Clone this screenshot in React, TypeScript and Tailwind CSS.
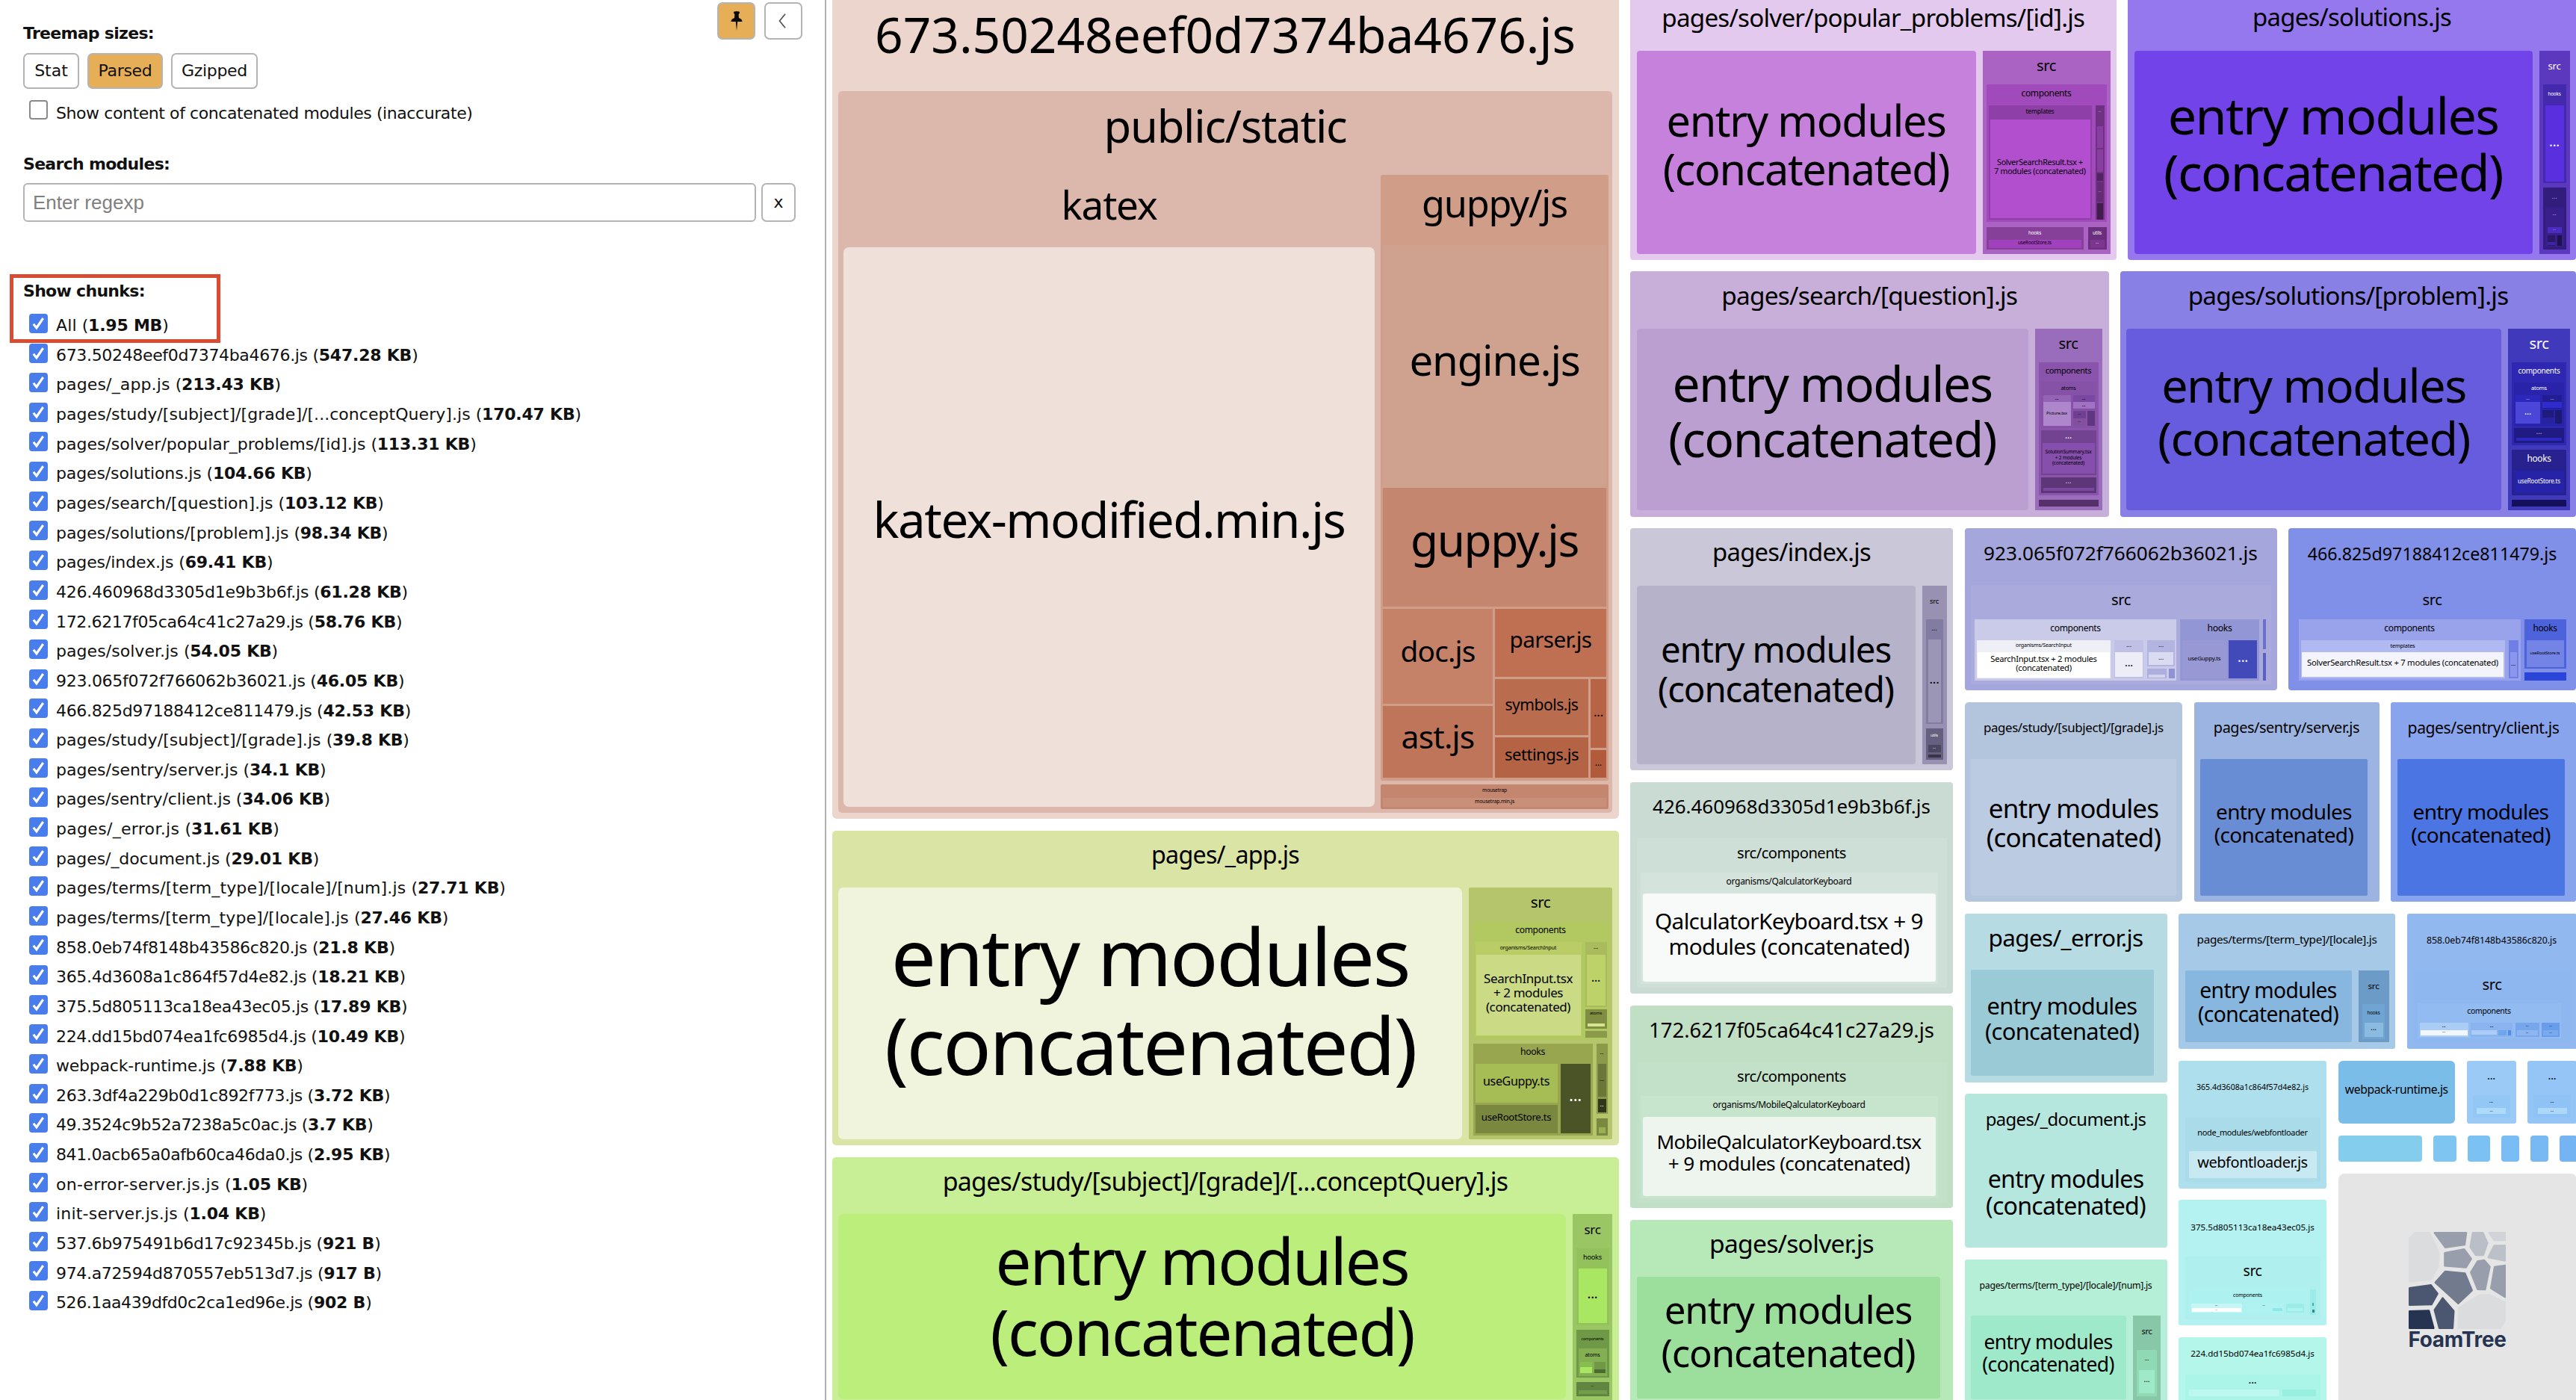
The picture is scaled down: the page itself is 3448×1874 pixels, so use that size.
import React from "react";

const NOTO = '"Noto Sans"';
const canvas = document.createElement("canvas").getContext("2d")!;

function measure(text: string, font: string) {
  canvas.font = font;
  return canvas.measureText(text).width / 100;
}

/* Text whose size follows from the width it has to fill. */
function Fit({ t, w, k = 1.05, family = NOTO, weight = "", c = "" }: { t: string; w: number; k?: number; family?: string; weight?: string; c?: string }) {
  const lines = t.split("|");
  const widths = lines.map((l) => measure(l, `${weight} 100px ${family}`.trim()));
  const i = widths.indexOf(Math.max(...widths));
  const size = (w / widths[i]) * k;
  const spacing = (w - widths[i] * size) / lines[i].length;
  return (
    <div
      className={`shrink-0 pb-[0.33em] text-center leading-[1.12] whitespace-nowrap ${c}`}
      style={{ fontSize: size, letterSpacing: spacing }}
    >
      {lines.map((l) => (
        <div key={l}>{l}</div>
      ))}
    </div>
  );
}

type BoxProps = { c: string; t?: string; w?: number; h?: string; b?: string; k?: number; children?: React.ReactNode };

/* A treemap cell: a heading over nested cells, or a centred label. */
function Box({ c, t, w = 0, h = "", b = "", k, children }: BoxProps) {
  return (
    <div className={`flex shrink-0 flex-col ${c}`}>
      {(t || h) && (
        <div className={`flex items-center justify-center ${children ? `shrink-0 ${h}` : "min-h-0 grow basis-0"}`}>
          {t && <Fit t={t} w={w} k={k} />}
        </div>
      )}
      {children && <div className={`flex min-h-0 grow ${b}`}>{children}</div>}
    </div>
  );
}

const ENTRY = "entry modules|(concatenated)";
const DOTS = "...";

function Chunk673() {
  return (
    <Box c="h-[1105px] rounded-[6px] bg-[#ebd5cd]" t="673.50248eef0d7374ba4676.js" w={938} k={1.0} h="h-[131px]" b="px-[8.5px]">
      <Box c="h-[966px] w-[1036px] rounded-[5px] bg-[#dcb8ac]" t="public/static" w={325} h="h-[112px]" b="pl-[7px] gap-[8px]">
        <Box c="w-[711px]" t="katex" w={128} h="h-[97px]">
          <Box c="h-[749px] w-[711px] rounded-[7px] bg-[#efe0da]" t="katex-modified.min.js" w={632} />
        </Box>
        <div className="flex flex-col gap-[5px]">
          <Box c="h-[811px] w-[305px] rounded-[3px] bg-[#d09d89]" t="guppy/js" w={195} h="h-[94px]" b="flex-col px-[3px]">
            <Box c="h-[325px] bg-[#cfa28f]" t="engine.js" w={228} />
            <Box c="h-[159px] bg-[#c58670]" t="guppy.js" w={225} />
            <div className="mt-[3px] flex gap-[3px]">
              <div className="flex flex-col gap-[3px]">
                <Box c="h-[127px] w-[147px] bg-[#c58268]" t="doc.js" w={100} />
                <Box c="h-[96px] w-[147px] bg-[#be755a]" t="ast.js" w={98} />
              </div>
              <div className="flex flex-col gap-[3px]">
                <Box c="h-[91px] w-[149px] bg-[#bf7053]" t="parser.js" w={110} />
                <div className="flex gap-[3px]">
                  <div className="flex flex-col gap-[3px]">
                    <Box c="h-[75px] w-[125px] bg-[#ba6c4f]" t="symbols.js" w={98} />
                    <Box c="h-[54px] w-[125px] bg-[#b46345]" t="settings.js" w={99} />
                  </div>
                  <div className="flex flex-col gap-[3px]">
                    <Box c="h-[92px] w-[21px] bg-[#b76345]" t={DOTS} w={13} />
                    <Box c="h-[37px] w-[21px] bg-[#b25a3c]" t={DOTS} w={9} />
                  </div>
                </div>
              </div>
            </div>
          </Box>
          <Box c="h-[33px] w-[305px] rounded-[2px] bg-[#c58670]" t="mousetrap" w={33} h="h-[18px]" b="px-[3px] pb-[3px]">
            <Box c="h-[12px] w-[299px] bg-[#c98f79]" t="mousetrap.min.js" w={53} />
          </Box>
        </div>
      </Box>
    </Box>
  );
}

function ChunkApp() {
  return (
    <Box c="h-[421.5px] rounded-[5px] bg-[#dae4a5]" t="pages/_app.js" w={198} h="h-[76px]" b="px-[8.5px] gap-[9px]">
      <Box c="h-[337px] w-[835px] rounded-[7px] bg-[#f1f4dd]" t={ENTRY} w={711} />
      <Box c="h-[337px] w-[192px] rounded-[2px] bg-[#b5c56c]" t="src" w={26.6} h="h-[46px]" b="flex-col gap-[6px] px-[5.5px]">
        <Box c="h-[157px] w-[181px] bg-[#b2c861]" t="components" w={67.6} h="h-[27px]" b="gap-[5px] pl-[3px]">
          <Box c="h-[126px] w-[142px] bg-[#b9cc66]" t="organisms/SearchInput" w={75.7} h="h-[17px]" b="px-[1px]">
            <Box c="h-[108px] w-[140px] bg-[#cbda85]" t="SearchInput.tsx|+ 2 modules|(concatenated)" w={119} />
          </Box>
          <div className="flex flex-col gap-[3px]">
            <Box c="h-[87px] w-[29px] bg-[#a9bb5c]" t={DOTS} w={6} h="h-[17px]" b="px-[2px]">
              <Box c="h-[68px] w-[25px] bg-[#bdd36a]" t={DOTS} w={12} />
            </Box>
            <Box c="h-[26px] w-[29px] bg-[#7f8e42]" t="atoms" w={16} h="h-[14px]" b="px-[3px] gap-[1px]">
              <Box c="mt-[5px] h-[4px] w-[23px] bg-[#d5e58e]" />
            </Box>
            <Box c="h-[9px] w-[29px] bg-[#8a9a4a]" />
          </div>
        </Box>
        <div className="flex gap-[5px]">
          <Box c="h-[123px] w-[160px] bg-[#98a74f]" t="hooks" w={33} h="h-[27px]" b="gap-[4px] pl-[3px]">
            <div className="flex flex-col gap-[3px]">
              <Box c="h-[52px] w-[110px] bg-[#a6bc54]" t="useGuppy.ts" w={89} />
              <Box c="h-[38px] w-[110px] bg-[#7a873f]" t="useRootStore.ts" w={93.5} />
            </div>
            <Box c="h-[93px] w-[40px] bg-[#4a5426] text-white" t={DOTS} w={17} />
          </Box>
          <div className="flex flex-col gap-[6px]">
            <Box c="h-[94px] w-[15px] bg-[#8b9a49]" t={DOTS} w={5} h="h-[27px]" b="flex-col gap-[3px] px-[2px]">
              <Box c="h-[44px] bg-[#6b7738]" t={DOTS} w={6} />
              <Box c="h-[18px] bg-[#30371a] text-white" t={DOTS} w={5} />
            </Box>
            <Box c="h-[23px] w-[15px] bg-[#7a893f]" h="h-[12px]" b="px-[3px]">
              <Box c="h-[8px] w-[9px] bg-[#9bb055]" />
            </Box>
          </div>
        </div>
      </Box>
    </Box>
  );
}

function ChunkStudyQuery() {
  return (
    <Box c="h-[400px] rounded-[5px] bg-[#c9ef96]" t="pages/study/[subject]/[grade]/[...conceptQuery].js" w={757} h="h-[76.5px]" b="px-[8.5px] gap-[9px]">
      <Box c="h-[248px] w-[974px] rounded-[7px] bg-[#bcee7c]" t={ENTRY} w={567} />
      <Box c="h-[300px] w-[53px] bg-[#9ac763]" t="src" w={22} h="h-[46px]" b="flex-col gap-[6px] px-[4.5px]">
        <Box c="h-[103px] w-[44px] bg-[#93c25c]" t="hooks" w={25} h="h-[27px]" b="px-[3px]">
          <Box c="h-[73px] w-[38px] bg-[#a9e662]" t={DOTS} w={14} />
        </Box>
        <Box c="h-[64px] w-[44px] bg-[#6f9946]" t="components" w={30} h="h-[25px]" b="px-[3px]">
          <Box c="h-[37px] w-[38px] bg-[#84b053]" t="atoms" w={20} h="h-[18px]" b="gap-[3px] px-[2px]">
            <Box c="h-[15px] w-[16px] bg-[#85c04f]" h="h-[7px]" b="">
              <Box c="h-[8px] w-[16px] bg-[#a9e662]" />
            </Box>
            <Box c="h-[15px] w-[15px] bg-[#6f9946]" h="h-[10px]">
              <Box c="h-[5px] w-[15px] bg-[#4b6b2f]" />
            </Box>
          </Box>
        </Box>
        <Box c="h-[19px] w-[44px] bg-[#618440]" t={DOTS} w={4} h="h-[11px]" b="px-[3px]">
          <Box c="h-[5px] w-[38px] bg-[#729d4b]" />
        </Box>
      </Box>
    </Box>
  );
}

function ChunkPopular() {
  return (
    <Box c="h-[356.5px] w-[650.5px] rounded-[4px] bg-[#e4c9ee]" t="pages/solver/popular_problems/[id].js" w={566} h="h-[76.5px]" b="pl-[8.5px] gap-[9px]">
      <Box c="h-[272px] w-[454px] rounded-[4px] bg-[#c581dc]" t={ENTRY} w={383.5} />
      <Box c="h-[272px] w-[171px] bg-[#ab63c3]" t="src" w={26} h="h-[45.5px]" b="flex-col gap-[7px] px-[5px]">
        <Box c="h-[184px] w-[161px] bg-[#a14abb]" t="components" w={67} h="h-[28px]" b="gap-[5px] pl-[3px]">
          <Box c="h-[153px] w-[138px] bg-[#8f40a8]" t="templates" w={38} h="h-[18.5px]" b="px-[2px]">
            <Box c="h-[132px] w-[134px] bg-[#b14fcf]" t="SolverSearchResult.tsx +|7 modules (concatenated)" w={122.5} />
          </Box>
          <Box c="h-[153px] w-[12px] bg-[#6f3181] text-white/60" t={DOTS} w={4} h="h-[18px]" b="flex-col gap-[2px] px-[2px]">
            <Box c="mt-[10px] h-[29px] bg-[#8a3da1]" />
            <Box c="h-[30px] bg-[#8a3da1]" />
            <Box c="h-[10px] bg-[#4f2460]" />
            <Box c="h-[26px] bg-[#622b74]" t={DOTS} w={4} />
            <Box c="h-[22px] bg-[#411c4c]" />
          </Box>
        </Box>
        <div className="flex gap-[6px]">
          <Box c="h-[30px] w-[130px] bg-[#87409a]" h="h-0" b="flex-col px-[3px]">
            <Box c="h-[16.5px] text-white" t="hooks" w={17} />
            <Box c="h-[11px] bg-[#a241bd]" t="useRootStore.ts" w={45} />
          </Box>
          <Box c="h-[30px] w-[25px] bg-[#6b2f7e] text-white" t="utils" w={12} h="h-[16.5px]" b="px-[3px]">
            <Box c="h-[11px] w-[19px] bg-[#7d3592]" t={DOTS} w={4} />
          </Box>
        </div>
      </Box>
    </Box>
  );
}

function ChunkSolutions() {
  return (
    <Box c="h-[356.5px] w-[600px] rounded-[4px] bg-[#9678ee]" t="pages/solutions.js" w={266} h="h-[76.5px]" b="pl-[8.5px] gap-[9px]">
      <Box c="h-[272px] w-[533px] rounded-[4px] bg-[#7243e9]" t={ENTRY} w={454} />
      <Box c="h-[272px] w-[41px] bg-[#5b38be] text-white" t="src" w={17} h="h-[45.5px]" b="flex-col gap-[6px] px-[5px]">
        <Box c="h-[132px] w-[31px] bg-[#4529ac]" t="hooks" w={17} h="h-[28px]" b="px-[3px]">
          <Box c="h-[102px] w-[25px] bg-[#592fde]" t={DOTS} w={14} />
        </Box>
        <Box c="h-[83px] w-[31px] bg-[#321d7c] text-white/60" t={DOTS} w={7} h="h-[27px]" b="px-[3px]">
          <Box c="h-[52px] w-[25px] bg-[#381f8c]" t={DOTS} w={5} h="h-[17px]" b="flex-col gap-[3px] px-[3px]">
            <Box c="mt-[9px] h-[8px] bg-[#4b2bc0]" t={DOTS} w={4} />
            <div className="flex gap-[3px]">
              <Box c="h-[14px] w-[10px] bg-[#2a1866]" h="h-[9px]">
                <Box c="h-[4px] w-[10px] bg-[#4123a6]" />
              </Box>
              <Box c="h-[14px] w-[6px] bg-[#1f114c]" />
            </div>
          </Box>
        </Box>
      </Box>
    </Box>
  );
}

function ChunkSearch() {
  return (
    <Box c="h-[328.5px] w-[640.5px] rounded-[4px] bg-[#c8afd9]" t="pages/search/[question].js" w={396} h="h-[76.5px]" b="pl-[8.5px] gap-[9px]">
      <Box c="h-[243px] w-[524px] rounded-[4px] bg-[#bb9fd1]" t={ENTRY} w={439} />
      <Box c="h-[243px] w-[90px] bg-[#9a6cbc]" t="src" w={26} h="h-[45.5px]" b="flex-col gap-[6px] px-[5px]">
        <Box c="h-[178px] w-[80px] bg-[#8a53ac]" t="components" w={61.5} h="h-[26px]" b="flex-col gap-[3px] px-[3px]">
          <Box c="h-[62px] w-[74px] bg-[#8552a8]" t="atoms" w={20} h="h-[18px]" b="gap-[3px] px-[3px]">
            <Box c="h-[41px] w-[37px] bg-[#9463b5]" t={DOTS} w={5} h="h-[9px]">
              <Box c="h-[32px] w-[37px] bg-[#ad86cc]" t="Picture.tsx" w={28} />
            </Box>
            <div className="flex flex-col gap-[2px]">
              <Box c="h-[19px] w-[29px] bg-[#7a48a0]" t={DOTS} w={5} h="h-[9px]">
                <Box c="h-[9px] w-[29px] bg-[#a172c4]" t={DOTS} w={5} />
              </Box>
              <div className="flex gap-[2px]">
                <Box c="h-[20px] w-[17px] bg-[#6f4092]" t={DOTS} w={4} h="h-[10px]">
                  <Box c="h-[10px] w-[17px] bg-[#82509f]" t={DOTS} w={4} />
                </Box>
                <Box c="h-[20px] w-[10px] bg-[#613681]" />
              </div>
            </div>
          </Box>
          <Box c="h-[60px] w-[74px] bg-[#714390]" h="h-0" b="flex-col px-[2px]">
            <Box c="h-[17px] text-white" t={DOTS} w={9} />
            <Box c="h-[41px] bg-[#864ead]" t="SolutionSummary.tsx|+ 2 modules|(concatenated)" w={62} />
          </Box>
          <Box c="h-[21px] w-[74px] bg-[#5d3677] text-white/70" t={DOTS} w={8} h="h-[14px]" b="px-[3px]">
            <Box c="h-[4px] w-[68px] bg-[#7a46a0]" />
          </Box>
        </Box>
        <Box c="h-[9px] w-[80px] bg-[#553069]" />
      </Box>
    </Box>
  );
}

function ChunkProblem() {
  return (
    <Box c="h-[328.5px] w-[610px] rounded-[4px] bg-[#8880e4]" t="pages/solutions/[problem].js" w={429} h="h-[76.5px]" b="pl-[8px] gap-[9px]">
      <Box c="h-[243px] w-[502px] rounded-[4px] bg-[#665cdd]" t={ENTRY} w={418} />
      <Box c="h-[243px] w-[83px] bg-[#4039bc] text-white" t="src" w={26} h="h-[45.5px]" b="flex-col gap-[6px] px-[5px]">
        <Box c="h-[111px] w-[73px] bg-[#2d27b2]" t="components" w={56} h="h-[27px]" b="flex-col gap-[3px] px-[3px]">
          <Box c="h-[58px] w-[67px] bg-[#2823a9]" t="atoms" w={21} h="h-[17px]" b="gap-[3px] px-[2px]">
            <Box c="h-[38px] w-[33px] bg-[#2c28bd] text-white/60" t={DOTS} w={5} h="h-[9px]">
              <Box c="h-[29px] w-[33px] bg-[#4c46d8] text-white" t={DOTS} w={9} />
            </Box>
            <div className="flex flex-col gap-[2px] text-white/60">
              <Box c="h-[18px] w-[26px] bg-[#221d92]" t={DOTS} w={5} h="h-[9px]">
                <Box c="h-[8px] w-[26px] bg-[#2e2ccc]" />
              </Box>
              <div className="flex gap-[2px]">
                <Box c="h-[18px] w-[15px] bg-[#1f1b7c]" h="h-[10px]">
                  <Box c="h-[8px] w-[15px] bg-[#2722a0]" />
                </Box>
                <Box c="h-[18px] w-[9px] bg-[#1c1970]" />
              </div>
            </div>
          </Box>
          <Box c="h-[20px] w-[67px] bg-[#1f1b82] text-white/60" t={DOTS} w={8} h="h-[13px]" b="px-[3px]">
            <Box c="h-[4px] w-[61px] bg-[#2c28bd]" />
          </Box>
        </Box>
        <Box c="h-[61px] w-[73px] bg-[#27228f]" t="hooks" w={32} h="h-[28px]" b="px-[3px]">
          <Box c="h-[30px] w-[67px] bg-[#2723a8]" t="useRootStore.ts" w={57} />
        </Box>
        <Box c="h-[9px] w-[73px] bg-[#14105c]" />
      </Box>
    </Box>
  );
}

function ColumnC() {
  return (
    <div className="flex w-[432px] shrink-0 flex-col gap-[15.5px]">
      <Box c="h-[324px] rounded-[4px] bg-[#cac8d8]" t="pages/index.js" w={212} h="h-[76.5px]" b="pl-[8.5px] gap-[9px]">
        <Box c="h-[239px] w-[373px] rounded-[4px] bg-[#b5b2c9]" t={ENTRY} w={316} />
        <Box c="h-[239px] w-[33px] bg-[#9891b2]" t="src" w={12} h="h-[45.5px]" b="flex-col gap-[6px] px-[5px]">
          <Box c="h-[140px] w-[23px] bg-[#827ba2]" t={DOTS} w={7} h="h-[27px]" b="px-[3px]">
            <Box c="h-[111px] w-[17px] bg-[#9c96b6]" t={DOTS} w={13} />
          </Box>
          <Box c="h-[42px] w-[23px] bg-[#65607f] text-white" t="utils" w={10} h="h-[22px]" b="flex-col gap-[3px] px-[3px]">
            <Box c="h-[10px] bg-[#4b4762]" t={DOTS} w={4} />
            <Box c="h-[4px] bg-[#38354a]" />
          </Box>
        </Box>
      </Box>
      <Box c="h-[283.5px] rounded-[4px] bg-[#c9dbd2]" t="426.460968d3305d1e9b3b6f.js" w={372} k={1} h="h-[75px]" b="px-[8.5px]">
        <Box c="h-[200px] w-[415px] bg-[#cddfd6]" t="src/components" w={146} h="h-[46px]" b="px-[5px]">
          <Box c="h-[149px] w-[398px] bg-[#d4e3dc]" t="organisms/QalculatorKeyboard" w={168} h="h-[28px]" b="px-[3px]">
            <Box c="h-[118px] w-[392px] rounded-[3px] bg-[#f8faf9]" t="QalculatorKeyboard.tsx + 9|modules (concatenated)" w={359} />
          </Box>
        </Box>
      </Box>
      <Box c="h-[271.5px] rounded-[4px] bg-[#c0dfc4]" t="172.6217f05ca64c41c27a29.js" w={382} k={1} h="h-[76px]" b="px-[8.5px]">
        <Box c="h-[188px] w-[415px] bg-[#c3e1c9]" t="src/components" w={146} h="h-[45px]" b="px-[5px]">
          <Box c="h-[137px] w-[398px] bg-[#c7e4cd]" t="organisms/MobileQalculatorKeyboard" w={204} h="h-[28px]" b="px-[3px]">
            <Box c="h-[106px] w-[392px] rounded-[3px] bg-[#edf5ee]" t="MobileQalculatorKeyboard.tsx|+ 9 modules (concatenated)" w={354.5} />
          </Box>
        </Box>
      </Box>
      <Box c="h-[300px] rounded-[4px] bg-[#b7e8b8]" t="pages/solver.js" w={220} h="h-[76px]" b="px-[8.5px]">
        <Box c="h-[163px] w-[406px] rounded-[3px] bg-[#9cdf9c]" t={ENTRY} w={340} />
      </Box>
    </div>
  );
}

function RowD1() {
  return (
    <div className="flex gap-[15.5px]">
      <Box c="h-[216.5px] w-[418px] rounded-[4px] bg-[#a5a6db]" t="923.065f072f766062b36021.js" w={367} k={1} h="h-[76px]" b="px-[8.5px]">
        <Box c="h-[133px] w-[402px] bg-[#aaaadc]" t="src" w={26} h="h-[46px]" b="gap-[5px] pl-[5px]">
          <Box c="h-[82px] w-[270px] bg-[#cacae9]" t="components" w={67.6} h="h-[28px]" b="gap-[5px] pl-[3px]">
            <Box c="h-[51px] w-[179px] bg-[#efeff8]" t="organisms/SearchInput" w={75} h="h-[16px]" b="px-[1px]">
              <Box c="h-[34px] w-[177px] bg-white" t="SearchInput.tsx + 2 modules|(concatenated)" w={142.6} />
            </Box>
            <Box c="h-[51px] w-[39px] bg-[#c0c0e6]" t={DOTS} w={7} h="h-[16px]" b="px-[1px]">
              <Box c="h-[33px] w-[37px] bg-[#ededf8]" t={DOTS} w={11} />
            </Box>
            <div className="flex flex-col gap-[3px]">
              <Box c="h-[35px] w-[37px] bg-[#b3b4e0]" t={DOTS} w={7} h="h-[16px]" b="px-[2px]">
                <Box c="h-[17px] w-[33px] bg-[#dadaf0]" t={DOTS} w={7} />
              </Box>
              <div className="flex gap-[3px]">
                <Box c="h-[13px] w-[26px] bg-[#aeaede]" h="h-[8px]" b="px-[2px]">
                  <Box c="h-[4px] w-[22px] bg-[#d3d3ed]" />
                </Box>
                <Box c="h-[13px] w-[8px] bg-[#9092d6]" />
              </div>
            </div>
          </Box>
          <Box c="h-[82px] w-[106px] bg-[#9296d4]" t="hooks" w={33} h="h-[28px]" b="gap-[3px] pl-[3px]">
            <Box c="h-[51px] w-[59px] bg-[#9898d5]" t="useGuppy.ts" w={44} />
            <Box c="h-[51px] w-[38px] bg-[#4249b9] text-white" t={DOTS} w={14} />
          </Box>
          <div className="flex flex-col gap-[5px]">
            <Box c="h-[40px] w-[4px] bg-[#6c6fcb]" />
            <Box c="h-[37px] w-[4px] bg-[#5c5fc5]" />
          </div>
        </Box>
      </Box>
      <Box c="h-[216.5px] w-[385px] rounded-[4px] bg-[#8090e8]" t="466.825d97188412ce811479.js" w={334} k={1} h="h-[76px]" b="px-[8.5px]">
        <Box c="h-[133px] w-[368px]" t="src" w={26} h="h-[46px]" b="gap-[5px] pl-[5px]">
          <Box c="h-[82px] w-[297px] bg-[#98a3ec]" t="components" w={67.6} h="h-[28px]" b="gap-[5px] pl-[3px]">
            <Box c="h-[51px] w-[273px] bg-[#b0b9f1]" t="templates" w={33} h="h-[16px]" b="px-[1.5px]">
              <Box c="h-[33px] w-[270px] bg-[#f4f5fc]" t="SolverSearchResult.tsx + 7 modules (concatenated)" w={256} />
            </Box>
            <Box c="h-[51px] w-[13px] bg-[#6f7fe5]" h="h-[16px]" b="px-[2px]">
              <Box c="h-[33px] w-[9px] bg-[#8a97ec]" t={DOTS} w={6} />
            </Box>
          </Box>
          <div className="flex flex-col gap-[5px]">
            <Box c="h-[66px] w-[56px] bg-[#4c63dc]" t="hooks" w={32} h="h-[28px]" b="px-[3px]">
              <Box c="h-[36px] w-[50px] bg-[#7483e6]" t="useRootStore.ts" w={40} />
            </Box>
            <Box c="h-[11px] w-[56px] bg-[#2b45d8]" />
          </div>
        </Box>
      </Box>
    </div>
  );
}

function RowD2() {
  return (
    <div className="flex gap-[15.5px]">
      <Box c="h-[267px] w-[291.5px] rounded-[5px] bg-[#b3c5dd]" t="pages/study/[subject]/[grade].js" w={241} h="h-[76px]" b="pl-[8.5px]">
        <Box c="h-[183px] w-[275px] rounded-[2px] bg-[#bbcbe2]" t={ENTRY} w={233.4} />
      </Box>
      <Box c="h-[267px] w-[248px] rounded-[3px] bg-[#9bb4e1]" t="pages/sentry/server.js" w={195.4} h="h-[76px]" b="pl-[8.5px]">
        <Box c="h-[183px] w-[224px] rounded-[2px] bg-[#688dd4]" t={ENTRY} w={186.4} />
      </Box>
      <Box c="h-[267px] w-[248px] rounded-[3px] bg-[#88a4ed]" t="pages/sentry/client.js" w={203} h="h-[76px]" b="pl-[8.5px]">
        <Box c="h-[183px] w-[224px] rounded-[2px] bg-[#4a75e3]" t={ENTRY} w={186.4} />
      </Box>
    </div>
  );
}

function ColumnE() {
  return (
    <div className="flex w-[271px] shrink-0 flex-col gap-[15.5px]">
      <Box c="h-[226px] rounded-[3px] bg-[#b7dbe2]" t="pages/_error.js" w={207} h="h-[75px]" b="pl-[8px]">
        <Box c="h-[142px] w-[245px] rounded-[2px] bg-[#99cad6]" t={ENTRY} w={206} />
      </Box>
      <Box c="h-[206px] rounded-[4px] bg-[#b5e7df]" t="pages/_document.js" w={214.7} h="h-[76px]" b="px-[8px]">
        <Box c="h-[122px] w-[255px]" t={ENTRY} w={214} />
      </Box>
      <Box c="h-[300px] rounded-[3px] bg-[#b5efd7]" t="pages/terms/[term_type]/[locale]/[num].js" w={231} h="h-[75px]" b="pl-[8px] gap-[9.5px]">
        <Box c="h-[112px] w-[208px] rounded-[2px] bg-[#9de9c9]" t={ENTRY} w={176.5} />
        <Box c="h-[220px] w-[37px] bg-[#88c8a8]" t="src" w={14} h="h-[46px]" b="px-[5px]">
          <Box c="h-[62px] w-[27px] bg-[#8fd9b5]" t={DOTS} w={6} h="h-[27px]" b="px-[3px]">
            <Box c="h-[31px] w-[21px] bg-[#9fe9c9]" t={DOTS} w={8} />
          </Box>
        </Box>
      </Box>
    </div>
  );
}

function Terms() {
  return (
    <div className="flex gap-[15.5px]">
      <Box c="h-[181.5px] w-[290px] rounded-[3px] bg-[#a5c9e7]" t="pages/terms/[term_type]/[locale].js" w={241} h="h-[76px]" b="pl-[8.5px] gap-[9px]">
        <Box c="h-[96px] w-[223px] rounded-[2px] bg-[#87b6df]" t={ENTRY} w={188} />
        <Box c="h-[96px] w-[41px] bg-[#6b9bc6]" t="src" w={15} h="h-[45.5px]" b="px-[5.5px]">
          <Box c="h-[47px] w-[30px] bg-[#6fa4d3]" t="hooks" w={17} h="h-[24.5px]" b="px-[2.5px]">
            <Box c="h-[19px] w-[25px] bg-[#8bbbe0]" t={DOTS} w={8} />
          </Box>
        </Box>
      </Box>
      <Box c="h-[181.5px] w-[227px] rounded-[3px] bg-[#92b9ef]" t="858.0eb74f8148b43586c820.js" w={174.4} k={1} h="h-[76px]" b="pl-[9px]">
        <Box c="h-[97px] w-[210px] bg-[#8eb7ef]" t="src" w={26} h="h-[44.5px]" b="pl-[5px]">
          <Box c="h-[47px] w-[192px] bg-[#92bbf1]" t="components" w={58.4} h="h-[25.5px]" b="gap-[3.5px] pl-[3px]">
            <Box c="h-[19px] w-[65px] bg-[#abcdf5]" t={DOTS} w={5} h="h-[10px]" b="px-[1px]">
              <Box c="h-[7px] w-[63px] bg-[#f2f7fe]" t={DOTS} w={4} />
            </Box>
            <Box c="h-[19px] w-[56px] bg-[#8ab3ef]" t={DOTS} w={5} h="h-[10px]" b="gap-[2px] px-[1px]">
              <Box c="h-[6px] w-[34px] bg-[#aaccf6]" />
              <Box c="h-[7px] w-[11px] bg-[#6fa5ec]" />
              <Box c="h-[7px] w-[4px] bg-[#4f8fe8]" />
            </Box>
            <Box c="h-[19px] w-[32px] bg-[#76a6ec]" t={DOTS} w={4} h="h-[10px]" b="px-[2px]">
              <Box c="h-[7px] w-[28px] bg-[#8db6f0]" t={DOTS} w={3.5} />
            </Box>
            <Box c="h-[19px] w-[24px] bg-[#699cea]" t={DOTS} w={4} h="h-[10px]" b="px-[2px]">
              <Box c="h-[7px] w-[20px] bg-[#7aaaee]" t={DOTS} w={3.5} />
            </Box>
          </Box>
        </Box>
      </Box>
    </div>
  );
}

function ColumnF() {
  return (
    <div className="flex w-[198px] shrink-0 flex-col gap-[15.5px]">
      <Box c="h-[171px] rounded-[3px] bg-[#aedfec]" t="365.4d3608a1c864f57d4e82.js" w={150} k={1} h="h-[76px]" b="px-[8.5px]">
        <Box c="h-[86px] w-[181px] bg-[#a9dbe9]" t="node_modules/webfontloader" w={147.5} h="h-[45.5px]" b="px-[5px]">
          <Box c="h-[36px] w-[171px] bg-[#c9e9f2]" t="webfontloader.js" w={147.5} />
        </Box>
      </Box>
      <Box c="h-[168px] rounded-[3px] bg-[#b3f2f0]" t="375.5d805113ca18ea43ec05.js" w={165.7} k={1} h="h-[76px]" b="px-[8.5px]">
        <Box c="h-[84px] w-[181px] bg-[#aff0ee]" t="src" w={25} h="h-[44px]" b="gap-[4.5px] pl-[5px]">
          <Box c="h-[34px] w-[158px] bg-[#adf2f1]" t="components" w={39} h="h-[18.5px]" b="gap-[4.5px] pl-[3px]">
            <Box c="h-[12px] w-[68px] bg-[#c6f7f6]" t={DOTS} w={3.5} h="h-[6.5px]" b="px-[1px]">
              <Box c="h-[5px] w-[66px] bg-white" t={DOTS} w={3} />
            </Box>
            <Box c="h-[12px] w-[50px] bg-[#b0f2f1]" t={DOTS} w={3.5} h="h-[6.5px]" b="justify-end">
              <Box c="h-[4px] w-[13px] bg-[#8ee9e6]" />
            </Box>
            <Box c="h-[12px] w-[24px] bg-[#9bebe9]" h="h-[6.5px]" b="px-[2px]">
              <Box c="h-[4px] w-[20px] bg-[#aff2f0]" />
            </Box>
          </Box>
          <Box c="h-[34px] w-[8px] bg-[#9bebe9]" h="h-[18px]" b="flex-col items-center gap-[5px]">
            <Box c="h-[4px] w-[2px] bg-[#4fa9a8]" />
            <Box c="h-[4px] w-[3px] bg-[#338a8a]" />
          </Box>
        </Box>
      </Box>
      <Box c="h-[120px] rounded-[3px] bg-[#b4f6e9]" t="224.dd15bd074ea1fc6985d4.js" w={165.7} k={1} h="h-[50px]" b="px-[8.5px]">
        <Box c="h-[60px] w-[181px] bg-[#aaf5e8]" t={DOTS} w={11} h="h-[20px]" b="gap-[5px] pl-[5px]">
          <Box c="h-[9px] w-[120px] bg-[#bdf8ef]" />
          <Box c="h-[9px] w-[45px] bg-[#97f0df]" />
        </Box>
      </Box>
    </div>
  );
}

const foam: [string, string][] = [
  ["3,20 25,3 80,3 116,65 113,110 85,150 3,157", "#dadcde"],
  ["99,3 221,3 215,40 140,49", "#989eac"],
  ["245,3 285,3 302,35 286,73 257,73 236,48", "#babec6"],
  ["308,3 369,3 369,26 327,26", "#d0d3d8"],
  ["327,44 369,43 369,91 305,80", "#bcc0c8"],
  ["138,67 213,55 240,85 220,112 138,107", "#989eac"],
  ["140,125 216,131 243,185 190,226 102,160", "#727b8e"],
  ["264,93 290,90 311,110 293,182 264,181 238,128", "#989eac"],
  ["329,111 369,106 369,206 315,178", "#989eac"],
  ["3,178 85,168 111,195 88,229 3,231", "#4b5770"],
  ["130,209 173,250 169,304 117,304 99,247", "#4b5770"],
  ["3,251 78,249 96,304 3,304", "#263452"],
  ["193,240 270,201 310,199 369,223 369,280 350,304 190,304", "#dadcde"],
];

function FoamLogo() {
  return (
    <div className="flex h-[320px] flex-col items-center rounded-[8px] bg-[#e5e5e5] pt-[78px]">
      <svg viewBox="0 0 372 307" preserveAspectRatio="none" className="h-[130px] w-[130px]">
        {foam.map(([points, fill]) => (
          <polygon key={points} points={points} fill={fill} stroke={fill} strokeWidth="6" strokeLinejoin="round" />
        ))}
      </svg>
      <Fit t="FoamTree" w={131} k={1.02} family="Inter" weight="700" c="-mt-[1px] font-[Inter] font-bold text-[#263452]" />
    </div>
  );
}

function SmallChunk({ c, in1, in2 }: { c: string; in1: string; in2: string }) {
  return (
    <Box c={`h-[84.5px] rounded-[3px] ${c}`} t={DOTS} w={11} h="h-[46.5px]" b="pl-[8px]">
      <Box c={`h-[30px] w-[50px] ${in1}`} t={DOTS} w={5} h="h-[17px]" b="px-[5.5px]">
        <Box c={`h-[8px] w-[39px] ${in2}`} t={DOTS} w={4.5} />
      </Box>
    </Box>
  );
}

function ColumnG() {
  return (
    <div className="flex w-[319px] shrink-0 flex-col gap-[15.5px]">
      <div className="flex gap-[15.5px]">
        <Box c="h-[84.5px] w-[156.5px] rounded-[6px] bg-[#7bbde9]" t="webpack-runtime.js" w={138} />
        <SmallChunk c="w-[66px] bg-[#9bcaf6]" in1="bg-[#93c7f5]" in2="bg-[#addaf9]" />
        <SmallChunk c="w-[66px] bg-[#95c4f6]" in1="bg-[#8fc3f5]" in2="bg-[#add8f9]" />
      </div>
      <div className="flex h-[35.5px] gap-[15px]">
        <div className="w-[112.5px] shrink-0 rounded-[4px] bg-[#85cdec]" />
        <div className="w-[30.5px] shrink-0 rounded-[4px] bg-[#7fc5f1]" />
        <div className="w-[30px] shrink-0 rounded-[4px] bg-[#7cc1f3]" />
        <div className="w-[24px] shrink-0 rounded-[4px] bg-[#7abdf4]" />
        <div className="w-[24px] shrink-0 rounded-[4px] bg-[#78b9f3]" />
        <div className="w-[24px] shrink-0 rounded-[4px] bg-[#75b4f2]" />
      </div>
      <FoamLogo />
    </div>
  );
}

function Treemap() {
  return (
    <div className="h-full w-[2342px] shrink-0 overflow-hidden pl-[7.5px] font-['Noto_Sans'] text-black">
      <div className="-mt-[9px] flex gap-[15.5px]">
        <div className="flex w-[1053px] shrink-0 flex-col gap-[15.5px]">
          <Chunk673 />
          <ChunkApp />
          <ChunkStudyQuery />
        </div>
        <div className="flex w-[1266px] shrink-0 flex-col gap-[15.5px]">
          <div className="flex gap-[15.5px]">
            <ChunkPopular />
            <ChunkSolutions />
          </div>
          <div className="flex gap-[15.5px]">
            <ChunkSearch />
            <ChunkProblem />
          </div>
          <div className="flex gap-[15.5px]">
            <ColumnC />
            <div className="flex w-[818px] shrink-0 flex-col gap-[16px]">
              <RowD1 />
              <RowD2 />
              <div className="flex gap-[15.5px]">
                <ColumnE />
                <div className="flex flex-col gap-[15.5px]">
                  <Terms />
                  <div className="flex gap-[15.5px]">
                    <ColumnF />
                    <ColumnG />
                  </div>
                </div>
              </div>
            </div>
          </div>
        </div>
      </div>
    </div>
  );
}

const chunks: [string, string, number][] = [
  ["673.50248eef0d7374ba4676.js", "547.28 KB", 343.9],
  ["pages/_app.js", "213.43 KB", 160.2],
  ["pages/study/[subject]/[grade]/[...conceptQuery].js", "170.47 KB", 562.2],
  ["pages/solver/popular_problems/[id].js", "113.31 KB", 421.9],
  ["pages/solutions.js", "104.66 KB", 202],
  ["pages/search/[question].js", "103.12 KB", 298],
  ["pages/solutions/[problem].js", "98.34 KB", 318.9],
  ["pages/index.js", "69.41 KB", 164.8],
  ["426.460968d3305d1e9b3b6f.js", "61.28 KB", 345.4],
  ["172.6217f05ca64c41c27a29.js", "58.76 KB", 337.8],
  ["pages/solver.js", "54.05 KB", 171.4],
  ["923.065f072f766062b36021.js", "46.05 KB", 340.8],
  ["466.825d97188412ce811479.js", "42.53 KB", 349.5],
  ["pages/study/[subject]/[grade].js", "39.8 KB", 362.2],
  ["pages/sentry/server.js", "34.1 KB", 251],
  ["pages/sentry/client.js", "34.06 KB", 241.3],
  ["pages/_error.js", "31.61 KB", 173],
  ["pages/_document.js", "29.01 KB", 226.5],
  ["pages/terms/[term_type]/[locale]/[num].js", "27.71 KB", 476],
  ["pages/terms/[term_type]/[locale].js", "27.46 KB", 399.5],
  ["858.0eb74f8148b43586c820.js", "21.8 KB", 343.4],
  ["365.4d3608a1c864f57d4e82.js", "18.21 KB", 342.3],
  ["375.5d805113ca18ea43ec05.js", "17.89 KB", 344.9],
  ["224.dd15bd074ea1fc6985d4.js", "10.49 KB", 341.8],
  ["webpack-runtime.js", "7.88 KB", 220.2],
  ["263.3df4a229b0d1c892f773.js", "3.72 KB", 337],
  ["49.3524c9b52a7238a5c0ac.js", "3.7 KB", 329.2],
  ["841.0acb65a0afb60ca46da0.js", "2.95 KB", 337],
  ["on-error-server.js.js", "1.05 KB", 226.5],
  ["init-server.js.js", "1.04 KB", 170.6],
  ["537.6b975491b6d17c92345b.js", "921 B", 349],
  ["974.a72594d870557eb513d7.js", "917 B", 350.4],
  ["526.1aa439dfd0c2ca1ed96e.js", "902 B", 337],
];

function Check() {
  return (
    <svg viewBox="0 0 26 26" className="-mt-[6.5px] h-[26px] w-[25px] shrink-0" preserveAspectRatio="none">
      <rect width="26" height="26" rx="4" fill="#4a7dec" />
      <path d="M6 13.8 L10.3 18.8 L19.5 6" fill="none" stroke="#fff" strokeWidth="3.2" />
    </svg>
  );
}

function ChunkRow({ name, size, w, c }: { name: string; size: string; w: number; c: string }) {
  const natural = measure(name + " ", '100px "DejaVu Sans"') * 22;
  const spacing = (w - 0.5 - natural) / (name.length + 1);
  return (
    <div className={`flex shrink-0 items-center gap-[11px] pl-[8px] ${c}`}>
      <Check />
      <div className="whitespace-pre">
        <span style={{ letterSpacing: spacing }}>{name + " "}</span>
        <span className="tracking-[-0.22px]">
          (<b>{size}</b>)
        </span>
      </div>
    </div>
  );
}

function Sidebar() {
  return (
    <div className="relative flex h-full w-[1106px] shrink-0 flex-col border-r-2 border-[#b0b0b0] bg-white pl-[31px] font-['DejaVu_Sans'] text-[22px] leading-[28px] text-[#111]">
      <div className="flex h-[54px] items-start justify-end gap-[12px] pt-[3px] pr-[30px]">
        <div className="flex h-[50px] w-[51px] items-center justify-center rounded-[7px] border-2 border-[#b4b4b4] bg-[#e6ae57]">
          <svg viewBox="0 0 16 26" className="h-[26px] w-[16px]">
            <path d="M4 1.5 Q4 0 8 0 Q12 0 12 1.5 Q12 3.4 10.6 4.2 L11 9 Q15.5 10.5 15.5 14 H9.2 L8 26 L6.8 14 H0.5 Q0.5 10.5 5 9 L5.4 4.2 Q4 3.4 4 1.5 Z" fill="#0a0a0a" />
          </svg>
        </div>
        <div className="flex h-[50px] w-[51px] items-center justify-center rounded-[7px] border-2 border-[#b4b4b4]">
          <svg viewBox="0 0 10 20" className="mr-[3px] h-[20px] w-[10px]">
            <path d="M9 0.8 L1.5 10 L9 19.2" fill="none" stroke="#555" strokeWidth="1.7" />
          </svg>
        </div>
      </div>
      <div className="-mt-[23px] h-[40px] font-bold tracking-[-0.7px]">Treemap sizes:</div>
      <div className="flex gap-[11px]">
        <div className="flex h-[48px] w-[75px] items-center justify-center rounded-[7px] border-2 border-[#b4b4b4]">Stat</div>
        <div className="flex h-[48px] w-[101px] items-center justify-center rounded-[7px] border-2 border-[#b4b4b4] bg-[#e6ae57] tracking-[-0.3px]">Parsed</div>
        <div className="flex h-[48px] w-[116px] items-center justify-center rounded-[7px] border-2 border-[#b4b4b4] tracking-[-0.3px]">Gzipped</div>
      </div>
      <div className="mt-[15px] flex gap-[11px] pl-[8px]">
        <div className="h-[26px] w-[25px] rounded-[4px] border-2 border-[#8a8a8a]" />
        <div className="mt-[4px] tracking-[-0.42px]">Show content of concatenated modules (inaccurate)</div>
      </div>
      <div className="mt-[39.5px] h-[39px] font-bold tracking-[-0.7px]">Search modules:</div>
      <div className="flex gap-[7px]">
        <div className="flex h-[52px] w-[981px] items-center rounded-[6px] border-2 border-[#b4b4b4] pl-[11px] font-['Liberation_Sans'] text-[26px] text-[#808080]">Enter regexp</div>
        <div className="flex h-[52px] w-[46px] items-center justify-center rounded-[7px] border-2 border-[#b4b4b4]">x</div>
      </div>
      <div className="mt-[79px] h-[40px] font-bold tracking-[-0.7px]">Show chunks:</div>
      <ChunkRow name="All" size="1.95 MB" w={35.2} c="h-[40.5px]" />
      {chunks.map(([name, size, w]) => (
        <ChunkRow key={name} name={name} size={size} w={w} c="h-[39.65px]" />
      ))}
      <div className="absolute top-[367px] left-[13px] h-[92px] w-[282px] border-[5.5px] border-[#da4b33]" />
    </div>
  );
}

export default function App() {
  return (
    <div className="flex h-[1874px] w-[3448px] overflow-hidden bg-white">
      <Sidebar />
      <Treemap />
    </div>
  );
}
